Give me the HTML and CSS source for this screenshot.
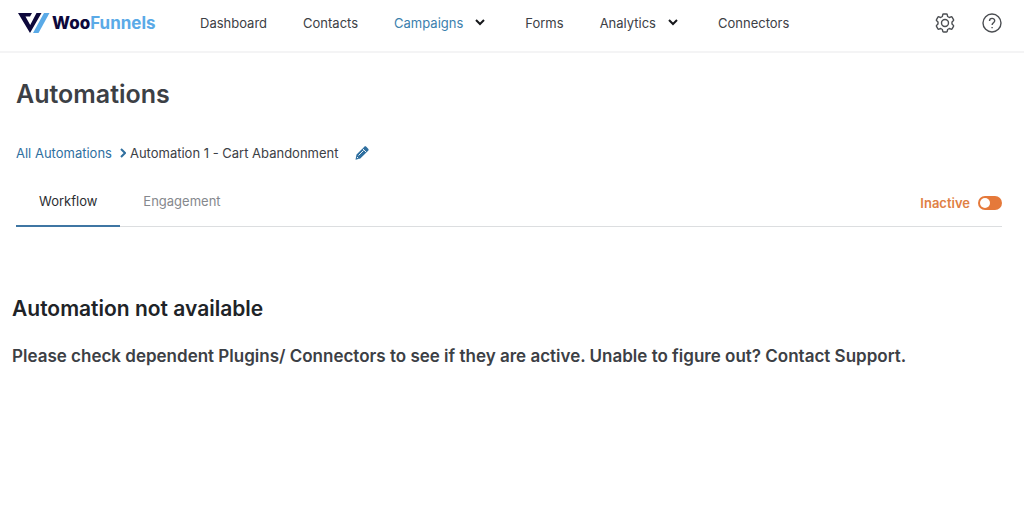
FILE: index.html
```
<!DOCTYPE html>
<html lang="en">
<head>
<meta charset="UTF-8">
<meta name="viewport" content="width=device-width, initial-scale=1">
<title>Automations - WooFunnels</title>
<link rel="stylesheet" href="styles.css">
</head>
<body>
<header class="header">
	<a class="logo" href="#">
		<svg width="32" height="22" viewBox="0 0 32 22">
			<path fill="#0d083b" d="M0 1h14l-2 3.500H7.500L12.200 13 18.500 1h5L12 21z"/>
			<path fill="#5aaae7" d="M26 1h5.500L20.500 21H15z"/>
		</svg>
		<span class="logo-text">Woo<b>Funnels</b></span>
	</a>
	<nav class="nav">
		<a href="#">Dashboard</a>
		<a href="#">Contacts</a>
		<a class="current" href="#">Campaigns <svg class="arrow" width="10" height="7" viewBox="0 0 10 7"><path d="M1 1l4 4 4-4"/></svg></a>
		<a href="#">Forms</a>
		<a href="#">Analytics <svg class="arrow" width="10" height="7" viewBox="0 0 10 7"><path d="M1 1l4 4 4-4"/></svg></a>
		<a href="#">Connectors</a>
	</nav>
	<div class="tools">
		<button type="button" class="icon-btn" aria-label="Settings">
			<svg width="20" height="22" viewBox="0 0 20 22">
				<path d="M8.600 2h2.800q.8 0 .9.800l.3 1.700 1.700 1 1.700-.6q.8-.3 1.200.4l1.300 2.300q.4.700-.2 1.200L17 10v2l1.300 1.200q.6.500.2 1.200l-1.300 2.300q-.4.700-1.200.4l-1.700-.6-1.700 1-.3 1.700q-.1.800-.9.800H8.600q-.8 0-.9-.8l-.3-1.700-1.700-1-1.700.6q-.8.300-1.200-.4l-1.300-2.300q-.4-.7.200-1.200L3 12v-2L1.700 8.800q-.6-.5-.2-1.200l1.300-2.300q.4-.7 1.200-.4l1.700.6 1.700-1 .3-1.700q.1-.8.900-.8z"/>
				<circle cx="10" cy="11" r="3.500"/>
			</svg>
		</button>
		<button type="button" class="icon-btn" aria-label="Help">
			<svg width="20" height="20" viewBox="0 0 20 20">
				<circle cx="10" cy="10" r="9"/>
				<path d="M7.500 8c0-3.600 5.200-3.400 5.200-.3 0 2-2.600 2.100-2.600 4.300M10.100 13.900v1.400"/>
			</svg>
		</button>
	</div>
</header>

<main class="main">
	<h1>Automations</h1>
	<div class="breadcrumb">
		<a href="#">All Automations</a>
		<svg class="sep" width="6" height="10" viewBox="0 0 6 10"><path d="M1 1l4 4-4 4"/></svg>
		<span>Automation 1 - Cart Abandonment</span>
		<button type="button" class="edit" aria-label="Edit name">
			<svg width="14" height="14" viewBox="0 0 14 14">
				<path fill="#2f6f9f" d="M9.300.8c.6-.6 1.400-.6 2 0l1.900 1.900c.6.6.6 1.400 0 2L5.300 12.600.5 13.700l1-5.100z"/>
				<path fill="none" stroke="#fff" stroke-width=".9" d="M7.800 2.800l3.400 3.400M3.500 9.500l5-5M2 11l1.200 1.200"/>
			</svg>
		</button>
	</div>
	<div class="tabs">
		<a class="tab active" href="#">Workflow</a>
		<a class="tab" href="#">Engagement</a>
		<label class="status">Inactive <input type="checkbox" class="switch"></label>
	</div>
	<section class="notice">
		<h2>Automation not available</h2>
		<p>Please check dependent Plugins/ Connectors to see if they are active. Unable to figure out? Contact Support.</p>
	</section>
</main>
</body>
</html>
```
FILE: styles.css
```
*{ margin:0; padding:0; box-sizing:border-box;}
body{ background:#fff; color:#3c4045; font:13px/20px Inter,"Liberation Sans",sans-serif;}
a{ color:inherit; text-decoration:none;}
button{ background:none; border:0; color:inherit; cursor:pointer;}
svg{ display:block;}

/*header*/
.header{ display:flex; align-items:center; height:53px; padding:0 22px 6px 18px; border-bottom:2px solid #f4f4f5;}
.logo{ display:flex; align-items:center; gap:2px; width:182px;}
.logo-text{ color:#0d083b; font-size:17px; font-weight:800;}
.logo-text b{ color:#5aaae7; font-weight:700;}
.nav{ display:flex; gap:36px;}
.nav a{ display:flex; align-items:center; gap:12px;}
.nav .current{ color:#3b80ad;}
.arrow{ fill:none; stroke:#16181b; stroke-width:2; margin-right:4px;}
.tools{ display:flex; align-items:center; gap:27px; margin-left:auto;}
.icon-btn svg{ fill:none; stroke:#4b4e52; stroke-width:1.4; stroke-linejoin:round;}

/*main*/
.main{ padding:23px 22px 0 16px;}
h1{ font-size:25px; line-height:36px; font-weight:600;}
.breadcrumb{ display:flex; align-items:center; margin-top:31px;}
.breadcrumb a{ color:#2f6f9f;}
.sep{ fill:none; stroke:#2f6f9f; stroke-width:2; margin:0 4px 0 8px;}
.edit{ margin-left:16px;}

.tabs{ display:flex; align-items:stretch; margin-top:16px; border-bottom:1px solid #dcdee0;}
.tab{ padding:12px 23px 14px; color:#85888d; border-bottom:2px solid transparent; margin-bottom:-1px;}
.tab.active{ color:#2b2e32; border-color:#3f76a3;}
.status{ display:flex; align-items:center; gap:8px; margin-left:auto; color:#df8044; font-weight:600;}
.switch{ appearance:none; width:24px; height:14px; padding:2px; border-radius:7px; background:#e5793a; cursor:pointer;}
.switch:before{ content:""; display:block; width:10px; height:10px; border-radius:50%; background:#fff;}
.switch:checked:before{ margin-left:auto;}

.notice{ margin:67px 0 0 -4px;}
h2{ color:#202327; font-size:21px; line-height:30px; font-weight:600;}
.notice p{ margin-top:20px; font-size:17px; line-height:24px; font-weight:600;}
```
